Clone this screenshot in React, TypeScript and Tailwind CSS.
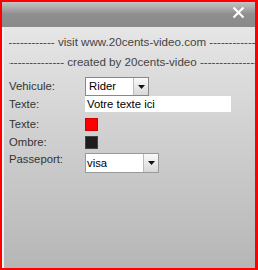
import React from "react";

const Arrow = () => (
  <span className="flex h-full w-[15px] items-center justify-center border-l border-[#bbb] bg-gradient-to-b from-[#fafafa] to-[#d8d8d8]">
    <svg width="7" height="4" viewBox="0 0 7 4">
      <path d="M0 0h7L3.5 4z" fill="#111" />
    </svg>
  </span>
);

export default function App() {
  return (
    <div
      className="h-[270px] w-[258px] border-2 border-[#ff0000] border-r-[3px] bg-[#ff0000] text-[12px] text-[#222]"
      style={{ fontFamily: '"Liberation Sans", Arial, sans-serif' }}
    >
      <div className="flex h-full flex-col">
        {/* Header */}
        <div className="flex h-[25px] items-start justify-end bg-gradient-to-b from-[#c4c4c4] via-[#8e8e8e] to-[#8a8a8a] pr-[10px] pt-[4px]">
          <svg width="13" height="13" viewBox="0 0 13 13">
            <path d="M1.5 1.5l10 10M11.5 1.5l-10 10" stroke="#fff" strokeWidth="2.2" />
          </svg>
        </div>
        {/* Body */}
        <div className="flex-1 border-l-[2px] border-[#f2f2f2] bg-gradient-to-b from-[#e6e6e6] to-[#b6b6b6] pl-[5px] text-[11.3px] text-[#333]">
          <div className="flex flex-col items-center overflow-hidden whitespace-nowrap pt-[5px] text-[11.6px] leading-[20px] text-[#444]">
            <div>------------- visit www.20cents-video.com -------------</div>
            <div>--------------- created by 20cents-video ---------------</div>
          </div>
          <div className="mt-[5px] flex flex-col">
            <div className="flex h-[19px] items-center">
              <span className="w-[76px]">Vehicule:</span>
              <div className="flex h-[19px] w-[64px] items-center border border-[#888] bg-white">
                <span className="flex-1 pl-[3px] text-black">Rider</span>
                <Arrow />
              </div>
            </div>
            <div className="flex h-[16px] items-center">
              <span className="w-[76px]">Texte:</span>
              <div className="flex h-[16px] w-[146px] items-center bg-white pl-[2px] text-black">Votre texte ici</div>
            </div>
            <div className="mt-[6px] flex h-[13px] items-center">
              <span className="w-[76px]">Texte:</span>
              <div className="h-[13px] w-[13px] border border-[#c00] bg-[#ff0000]" />
            </div>
            <div className="mt-[5px] flex h-[13px] items-center">
              <span className="w-[76px]">Ombre:</span>
              <div className="h-[13px] w-[13px] border border-[#444] bg-[#1e1e1e]" />
            </div>
            <div className="mt-[4px] flex h-[20px] items-start">
              <span className="w-[76px] leading-[13px]">Passeport:</span>
              <div className="flex h-[20px] w-[74px] items-center border border-[#999] bg-white">
                <span className="flex-1 pl-[1px] text-black">visa</span>
                <Arrow />
              </div>
            </div>
          </div>
        </div>
      </div>
    </div>
  );
}
